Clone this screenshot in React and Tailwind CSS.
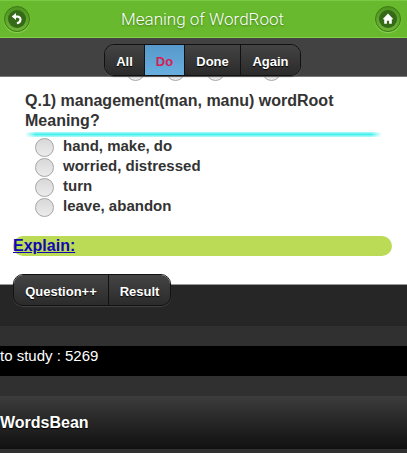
import React, { useState } from "react";

const filters = [
  { name: "All", width: "w-10" },
  { name: "Do", width: "w-10" },
  { name: "Done", width: "w-14" },
  { name: "Again", width: "w-[59px]" },
];
const answers = ["hand, make, do", "worried, distressed", "turn", "leave, abandon"];

const radioLook =
  "block size-[19px] shrink-0 appearance-none rounded-full border border-[#a6a6a6] bg-linear-to-b from-[#d8d8d8] to-[#ececec] checked:border-[#4a4a4a]";
const darkButton =
  "bg-linear-to-b from-[#444444] to-[#2b2b2b] text-white [text-shadow:0_1px_1px_#000]";

function RoundButton({ label, children }) {
  return (
    <button
      type="button"
      aria-label={label}
      className="flex size-[26px] items-center justify-center rounded-full border border-[#3c7a12] bg-linear-to-b from-[#4d9420] to-[#6eb536] shadow-[0_1px_1px_#8fd35c]"
    >
      <span className="flex size-[18px] items-center justify-center rounded-full bg-[#356a18]">
        {children}
      </span>
    </button>
  );
}

export default function App() {
  const [active, setActive] = useState("Do");
  return (
    <div className="bg-white font-['Liberation_Sans',Arial,sans-serif] text-[#333333]">
      <header className="flex h-[38px] items-center justify-between border-y border-t-[#7ac943] border-b-[#86d048] bg-[#69b92e] pr-1.5 pl-1">
        <RoundButton label="Back">
          <svg viewBox="0 0 18 18" className="size-[18px]" fill="none">
            <path d="M6.5 6.6H9.6a2.9 2.9 0 0 1 2.9 2.9c0 1.9-1.3 3.3-3.6 3.8" stroke="#fff" strokeWidth="2.1" />
            <path d="M3.8 6.6 8 3.1v7z" fill="#fff" />
          </svg>
        </RoundButton>
        <h1 className="font-[Roboto,sans-serif] text-[17px] leading-6 font-light text-white [text-shadow:0_1px_2px_#3c7a12]">
          Meaning of WordRoot
        </h1>
        <RoundButton label="Home">
          <svg viewBox="0 0 18 18" className="size-[18px]" fill="#fff">
            <path d="M9 3.4 3.6 9.2h1.6v4.6h2.7v-3h2.2v3h2.7V9.2h1.6z" />
          </svg>
        </RoundButton>
      </header>

      <nav className="relative z-10 flex h-[39px] justify-center border-b border-[#777777] bg-[#424242] pt-1.5 pr-0.5">
        <div className="flex h-8 overflow-hidden rounded-[10px] border border-[#111111] shadow-[0_1px_1px_#555555]">
          {filters.map(({ name, width }) => (
            <button
              key={name}
              type="button"
              onClick={() => setActive(name)}
              className={`${width} border-r border-[#111111] pt-1 text-[13px] font-bold last:border-r-0 ${
                active === name ? "bg-linear-to-b from-[#5799cb] to-[#68afe0] text-[#d81b52]" : darkButton
              }`}
            >
              {name}
            </button>
          ))}
        </div>
      </nav>

      <main className="border-b border-[#999999] pb-7">
        <div className="-mt-[15px] flex justify-center gap-[21px]">
          {filters.map(({ name }) => (
            <input
              key={name}
              type="radio"
              name="filter"
              aria-label={name}
              className={`${radioLook} last:ml-4`}
            />
          ))}
        </div>
        <h2 className="mx-[25px] mt-[10px] text-base leading-5 font-bold">
          Q.1) management(man, manu) wordRoot Meaning?
        </h2>
        <hr className="mx-[25px] mt-px h-[5px] border-0 bg-linear-to-b from-[#a5faf8] via-[#43f0ee] to-[#b5fbfa] mask-x-from-97% mask-x-to-100%" />
        <div className="mt-px pl-[35px]">
          {answers.map((answer) => (
            <label key={answer} className="flex h-5 items-start gap-[9px] text-[15px] leading-4 font-bold">
              <input type="radio" name="answer" className={radioLook} />
              {answer}
            </label>
          ))}
        </div>
        <div className="mt-[18px] mr-[15px] ml-[13px]">
          <div className="h-5 rounded-full bg-[#bbda55]">
            <a href="#explain" className="block text-base leading-5 font-bold text-[#1207b5] underline">
              Explain:
            </a>
          </div>
        </div>
      </main>

      <section className="h-[41px] bg-[#262626] px-[13px]">
        <div className="relative -top-[11px] inline-flex h-8 overflow-hidden rounded-[10px] border border-[#111111] shadow-[0_1px_1px_#444444]">
          <button type="button" className={`${darkButton} w-[95px] border-r border-[#111111] pt-1 text-[13px] font-bold`}>
            Question++
          </button>
          <button type="button" className={`${darkButton} w-[61px] pt-1 text-[13px] font-bold`}>
            Result
          </button>
        </div>
      </section>
      <div className="bg-[#303030] py-5">
        <p className="h-[30px] bg-black text-[15px] leading-5 text-white">to study : 5269</p>
      </div>
      <footer className="border-b-4 border-[#303030] bg-linear-to-b from-[#3d3d3d] to-[#111111]">
        <h3 className="flex h-[53px] items-center text-base font-bold text-white [text-shadow:0_1px_1px_#000]">
          WordsBean
        </h3>
      </footer>
    </div>
  );
}
